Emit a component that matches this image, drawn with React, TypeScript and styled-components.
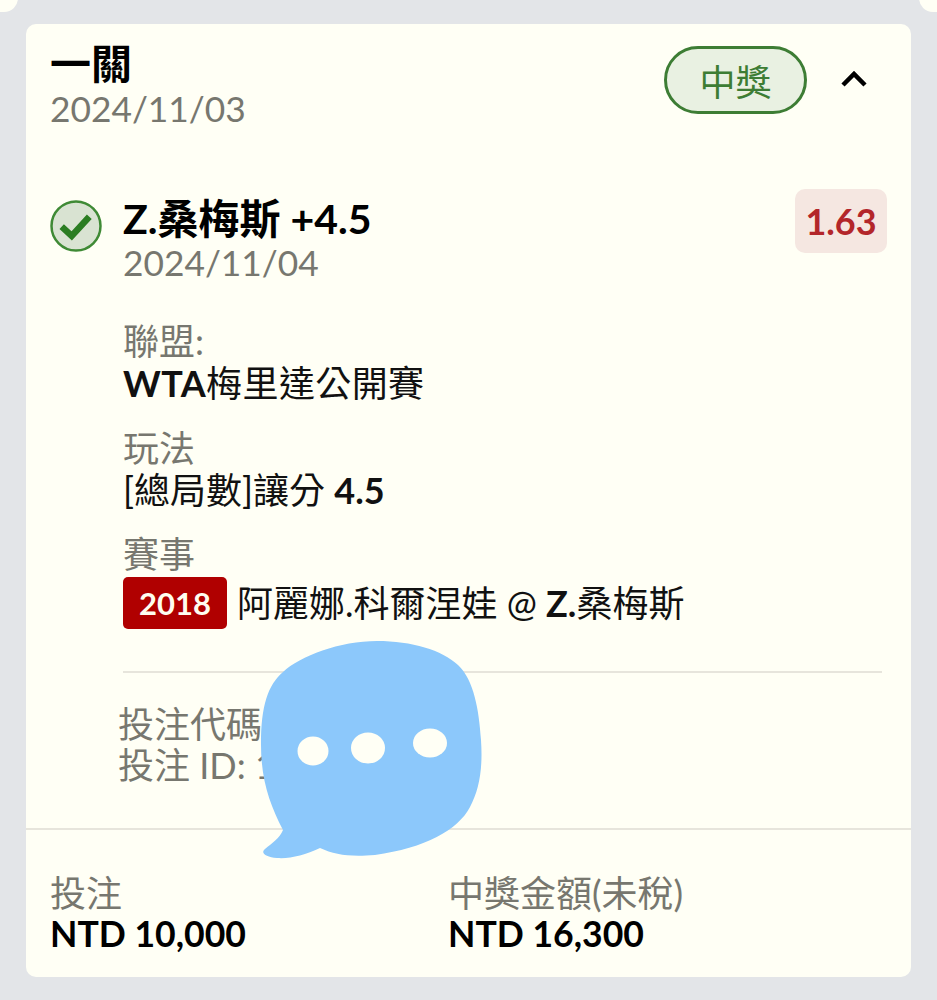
import React from "react";
import styled, { createGlobalStyle } from "styled-components";

const Global = createGlobalStyle`
  html, body { margin: 0; padding: 0; background: #e3e5e8; }
  body { font-family: Lato, "Noto Sans CJK TC", sans-serif; }
`;
const Page = styled.div`
  position: relative; width: 937px; height: 1000px; box-sizing: border-box;
  padding: 24px 26px 23px; background: #e3e5e8; overflow: hidden;
`;
const Corner = styled.div<{ $side: "left" | "right" }>`
  position: absolute; top: -10px; ${(p) => p.$side}: 0; width: 18px; height: 22px; background: #fffff5;
  border-${(p) => (p.$side === "left" ? "bottom-right" : "bottom-left")}-radius: 14px;
`;
const Card = styled.div`
  position: relative; height: 953px; display: flex; flex-direction: column;
  background: #fffff5; border-radius: 10px; overflow: hidden;
`;
const Header = styled.header`
  display: flex; justify-content: space-between; align-items: flex-start; padding: 13px 24px 0 24px;
`;
const Title = styled.div`
  font-size: 41px; line-height: 53px; font-weight: 700; color: #000;
`;
const DateText = styled.div`
  font-size: 35.3px; line-height: 38px; color: #77776f;
`;
const HeaderRight = styled.div`
  display: flex; align-items: center; gap: 33px; padding: 9px 19px 0 0;
`;
const Status = styled.div`
  box-sizing: border-box; width: 143px; height: 68px; display: flex; align-items: center; justify-content: center;
  border: 3px solid #3d7d34; border-radius: 34px; background: #e9f1e2; color: #3d7d34; font-size: 36px;
`;
const Leg = styled.section`
  display: grid; grid-template-columns: 74px 1fr auto; padding: 65px 24px 0 23px;
`;
const CheckWrap = styled.div`
  padding-top: 6px;
`;
const LegTitle = styled.div`
  font-size: 41px; line-height: 51px; font-weight: 700; color: #000;
`;
const Odds = styled.div`
  width: 92px; height: 64px; display: flex; align-items: center; justify-content: center; border-radius: 10px;
  background: #f5e7e1; color: #b3262a; font-size: 36px; font-weight: 700; margin-top: -4px;
`;
const Details = styled.div`
  padding: 38px 29px 0 97px; display: flex; flex-direction: column;
`;
const Field = styled.div`
  margin-bottom: 22.5px;
`;
const Label = styled.div`
  font-size: 36px; line-height: 42px; color: #77776f;
`;
const Value = styled.div`
  font-size: 36px; line-height: 42px; color: #111;
  display: flex; align-items: center; white-space: pre;
`;
const LeagueValue = styled(Value)`
  letter-spacing: 0.4px;
`;
const Strong = styled.b`
  font-weight: 700;
`;
const EventBadge = styled.span`
  width: 104px; height: 52px; margin-right: 10px; display: inline-flex; align-items: center; justify-content: center;
  background: #b00000; color: #fffdf0; border-radius: 5px; font-size: 31px; font-weight: 700;
`;
const EventValue = styled(Value)`
  height: 52px; margin-top: 2px;
`;
const Divider = styled.div`
  height: 2px; background: #e7e5dc; margin: 42px 29px 0 97px;
`;
const Codes = styled.div`
  padding: 31px 0 0 92px; font-size: 36px; line-height: 41px; color: #77776f; height: 124px;
`;
const FullDivider = styled.div`
  height: 2px; background: #e7e5dc;
`;
const Footer = styled.footer`
  display: grid; grid-template-columns: 398px 1fr; padding: 43px 24px 0;
`;
const Amount = styled.div`
  font-size: 35.6px; line-height: 39px; font-weight: 700; color: #000;
`;
const FooterLabel = styled.div`
  font-size: 36px; line-height: 41px; color: #77776f;
`;
const Bubble = styled.svg`
  position: absolute; left: 0; top: 0; width: 937px; height: 1000px; pointer-events: none;
`;

export default function App() {
  return (
    <Page>
      <Global />
      <Corner $side="left" />
      <Corner $side="right" />
      <Card>
        <Header>
          <div>
            <Title>一關</Title>
            <DateText>2024/11/03</DateText>
          </div>
          <HeaderRight>
            <Status>中獎</Status>
            <svg width="28" height="20" viewBox="0 0 28 20" fill="none">
              <path d="M3 15 L14 4 L25 15" stroke="#000" strokeWidth="4.5" strokeLinejoin="miter" />
            </svg>
          </HeaderRight>
        </Header>
        <Leg>
          <CheckWrap>
            <svg width="54" height="54" viewBox="0 0 54 54" fill="none">
              <circle cx="27" cy="27" r="24.5" fill="#d9e3d2" stroke="#3f8a35" strokeWidth="2.5" />
              <path d="M12.7 27.7 L22.7 37 L40.3 17.7" stroke="#2b7d22" strokeWidth="6.5" />
            </svg>
          </CheckWrap>
          <div>
            <LegTitle>Z.桑梅斯 +4.5</LegTitle>
            <DateText>2024/11/04</DateText>
          </div>
          <Odds>1.63</Odds>
        </Leg>
        <Details>
          <Field>
            <Label>聯盟:</Label>
            <LeagueValue><Strong>WTA</Strong>梅里達公開賽</LeagueValue>
          </Field>
          <Field>
            <Label>玩法</Label>
            <Value>[總局數]讓分 <Strong>4.5</Strong></Value>
          </Field>
          <div>
            <Label>賽事</Label>
            <EventValue><EventBadge>2018</EventBadge>阿麗娜.科爾涅娃 @ <Strong>Z.</Strong>桑梅斯</EventValue>
          </div>
        </Details>
        <Divider />
        <Codes>
          <div>投注代碼</div>
          <div>投注 ID: 1</div>
        </Codes>
        <FullDivider />
        <Footer>
          <div>
            <FooterLabel>投注</FooterLabel>
            <Amount>NTD 10,000</Amount>
          </div>
          <div>
            <FooterLabel>中獎金額(未稅)</FooterLabel>
            <Amount>NTD 16,300</Amount>
          </div>
        </Footer>
      </Card>
      <Bubble viewBox="0 0 937 1000">
        <path
          d="M283 830 C270 805 261 780 261 745 C261 705 268 685 283 672 C300 656 340 641 377 641 C412 641 442 650 458 665 C474 680 479 710 481 740 C483 770 479 790 470 807 C458 830 425 848 375 855 C350 857 335 855 320 848 C305 855 290 859 277 858 C266 857 260 853 265 849 C272 843 280 838 283 830 Z"
          fill="#8cc8fb"
        />
        <ellipse cx="313" cy="751" rx="15.5" ry="14.5" fill="#fffff5" />
        <ellipse cx="368" cy="748" rx="17" ry="15.5" fill="#fffff5" />
        <ellipse cx="430" cy="743" rx="17" ry="14.5" fill="#fffff5" />
      </Bubble>
    </Page>
  );
}
